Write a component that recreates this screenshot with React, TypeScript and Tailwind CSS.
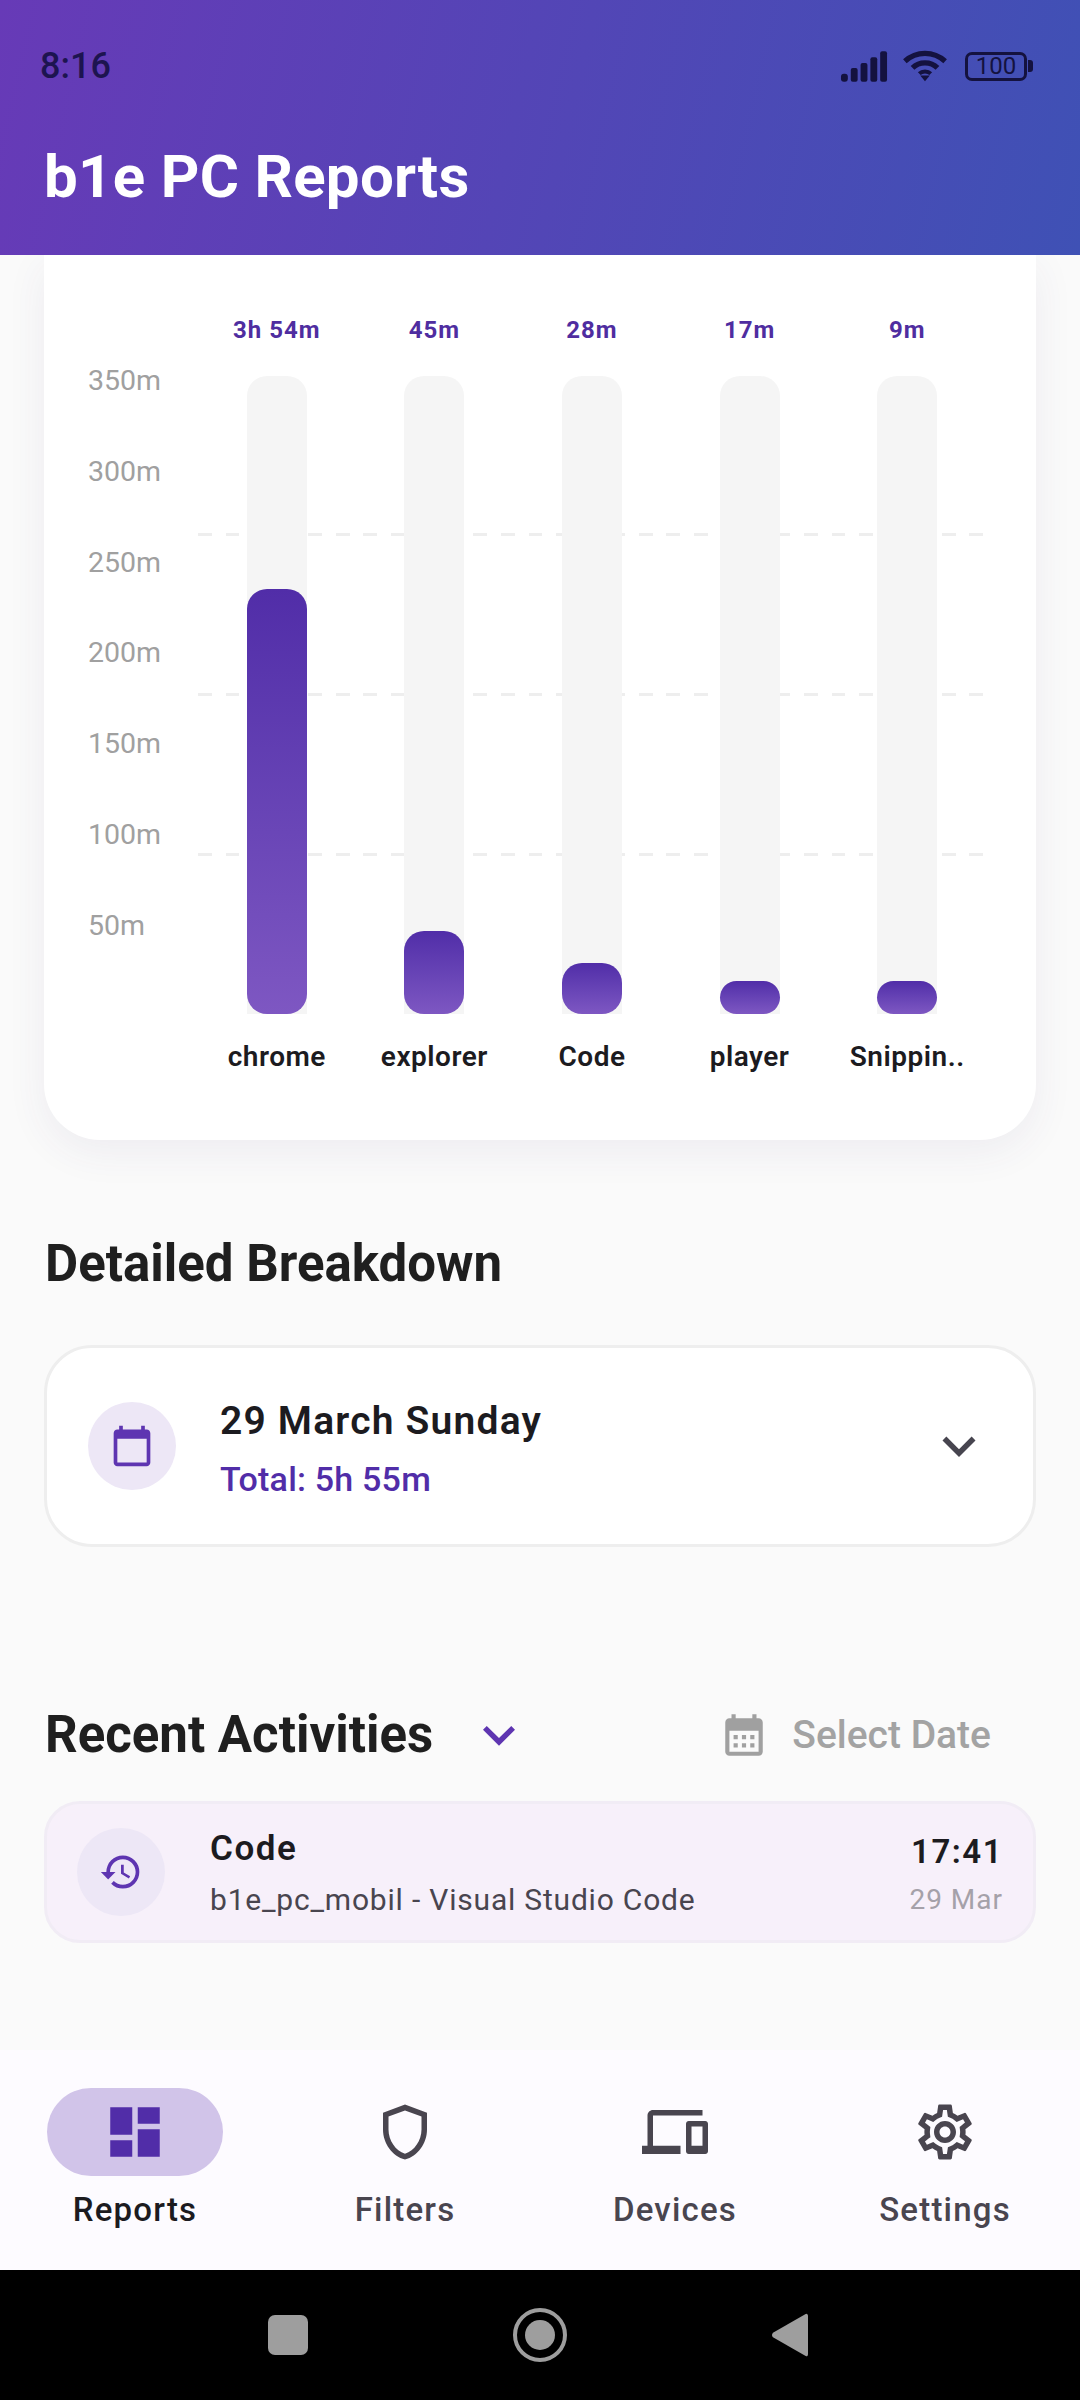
import {
  MdCalendarMonth,
  MdCalendarToday,
  MdDashboard,
  MdExpandMore,
  MdHistory,
  MdOutlineDevices,
  MdOutlineSettings,
  MdOutlineShield,
} from "react-icons/md";

const apps = [
  { value: "3h 54m", name: "chrome", fill: "h-[425px]" },
  { value: "45m", name: "explorer", fill: "h-[83px]" },
  { value: "28m", name: "Code", fill: "h-[51px]" },
  { value: "17m", name: "player", fill: "h-[33px]" },
  { value: "9m", name: "Snippin..", fill: "h-[33px]" },
];

const ticks = ["350m", "300m", "250m", "200m", "150m", "100m", "50m"];

const tabs = [
  { label: "Reports", Icon: MdDashboard },
  { label: "Filters", Icon: MdOutlineShield },
  { label: "Devices", Icon: MdOutlineDevices },
  { label: "Settings", Icon: MdOutlineSettings },
];

function StatusIcons() {
  return (
    <div className="flex items-center gap-[13px] text-[#14123f]">
      <svg width="49" height="32" viewBox="0 0 50 32" fill="currentColor">
        <rect x="1" y="24" width="7" height="8" rx="3" />
        <rect x="11" y="18" width="7" height="14" rx="2" />
        <rect x="21" y="13" width="7" height="19" rx="2" />
        <rect x="31" y="7" width="7" height="25" rx="2" />
        <rect x="41" y="1" width="7" height="31" rx="2" />
      </svg>
      <svg width="46" height="34" viewBox="0 0 48 34" fill="none" stroke="currentColor" strokeWidth="5.5">
        <path d="M3 12 C15 1 33 1 45 12" />
        <path d="M11 19 C18 12 30 12 37 19" />
        <path d="M18 25 C21 22 27 22 30 25" strokeWidth="4" />
        <path d="M19 27 L24 33 L29 27 Z" fill="currentColor" stroke="none" />
      </svg>
      <div className="ml-[4px] flex items-center gap-[1px]">
        <div className="flex h-[29px] w-[62px] items-center justify-center rounded-[7px] border-[3px] border-[#14123f] text-[24px] leading-none text-[#14123f]">
          100
        </div>
        <div className="h-[12px] w-[5px] rounded-r-[3px] bg-[#14123f]" />
      </div>
    </div>
  );
}

function ChartCard() {
  return (
    <section className="mx-[44px] h-[885px] rounded-b-[56px] bg-white px-[44px] pt-[57px] shadow-[0_12px_40px_rgba(70,60,120,0.07)]">
      <div className="flex">
        <div className="mt-[55px] flex h-[560px] w-[110px] flex-col gap-[62.8px]">
          {ticks.map((tick) => (
            <span className="h-[28px] text-[28.5px] leading-[28px] text-[#a0a0a0]" key={tick}>
              {tick}
            </span>
          ))}
        </div>
        <div className="relative flex w-[788px]">
          <div className="absolute left-[0px] right-[3px] top-[221px] h-[3px] bg-[repeating-linear-gradient(90deg,#eeeeee_0_13.8px,transparent_13.8px_27.55px)]" />
          <div className="absolute left-[0px] right-[3px] top-[381px] h-[3px] bg-[repeating-linear-gradient(90deg,#eeeeee_0_13.8px,transparent_13.8px_27.55px)]" />
          <div className="absolute left-[0px] right-[3px] top-[541px] h-[3px] bg-[repeating-linear-gradient(90deg,#eeeeee_0_13.8px,transparent_13.8px_27.55px)]" />
          {apps.map((app) => (
            <div className="relative flex w-[157.6px] flex-col items-center" key={app.name}>
              <span className="h-[36px] text-[24px] font-bold leading-[36px] tracking-[1px] text-[#4f2da0]">{app.value}</span>
              <div className="mt-[28px] flex h-[638px] w-[60px] flex-col justify-end rounded-t-[20px] bg-[#f5f5f5]">
                <div className={`${app.fill} rounded-[20px] bg-gradient-to-b from-[#512da8] to-[#7e57c2]`} />
              </div>
              <span className="mt-[25px] whitespace-nowrap text-[28px] font-semibold leading-[36px] tracking-[0.5px] text-[#1c1b1f]">{app.name}</span>
            </div>
          ))}
        </div>
      </div>
    </section>
  );
}

function BreakdownCard() {
  return (
    <div className="mx-[44px] mt-[48px] flex h-[202px] items-center rounded-[48px] border-[3px] border-[#eeeeee] bg-white px-[41px]">
      <div className="flex h-[88px] w-[88px] items-center justify-center rounded-full bg-[#ede7f6]">
        <MdCalendarToday className="text-[44px] text-[#5e35b1]" />
      </div>
      <div className="ml-[44px] flex flex-1 flex-col pt-[4px]">
        <span className="text-[39px] font-semibold leading-[48px] tracking-[1.2px] text-[#1c1b1f]">29 March Sunday</span>
        <span className="mt-[14px] text-[34px] font-medium leading-[40px] tracking-[0.2px] text-[#512da8]">Total: 5h 55m</span>
      </div>
      <MdExpandMore className="text-[66px] text-[#47454f]" />
    </div>
  );
}

function ActivityCard() {
  return (
    <div className="mx-[44px] mt-[33px] flex h-[142px] items-center rounded-[36px] border-[3px] border-[#f1ecf5] bg-[#f7f0fa] px-[30px]">
      <div className="flex h-[88px] w-[88px] items-center justify-center rounded-full bg-[#ede7f6]">
        <MdHistory className="text-[44px] text-[#5e35b1]" />
      </div>
      <div className="ml-[45px] flex flex-1 flex-col pt-[4px]">
        <span className="text-[35px] font-semibold leading-[40px] tracking-[1.5px] text-[#1c1b1f]">Code</span>
        <span className="mt-[12px] text-[30px] leading-[38px] tracking-[0.8px] text-[#49454f]">b1e_pc_mobil - Visual Studio Code</span>
      </div>
      <div className="flex flex-col items-end pt-[6px]">
        <span className="text-[33px] font-semibold leading-[40px] tracking-[1.5px] text-[#1c1b1f]">17:41</span>
        <span className="mt-[10px] text-[28px] leading-[36px] tracking-[1px] text-[#a5a1a9]">29 Mar</span>
      </div>
    </div>
  );
}

function BottomNav() {
  return (
    <nav className="flex h-[220px] bg-[#fdfbff]">
      {tabs.map(({ label, Icon }, i) => (
        <div className="flex w-[270px] flex-col items-center pt-[38px]" key={label}>
          <div className={`flex h-[88px] w-[176px] items-center justify-center rounded-[44px] ${i === 0 ? "bg-[#d1c4e9]" : ""}`}>
            <Icon className={`text-[66px] ${i === 0 ? "text-[#512da8]" : "text-[#49454f]"}`} />
          </div>
          <span className={`mt-[12px] text-[33px] font-medium leading-[44px] tracking-[1.2px] ${i === 0 ? "text-[#1c1b1f]" : "text-[#49454f]"}`}>
            {label}
          </span>
        </div>
      ))}
    </nav>
  );
}

export default function App() {
  return (
    <main className="flex h-[2400px] w-[1080px] flex-col overflow-hidden bg-[#fafafa] font-['Roboto',sans-serif]">
      <header className="z-10 h-[255px] bg-[linear-gradient(103deg,#673ab7,#3f51b5)] px-[40px] pt-[46px]">
        <div className="flex h-[40px] items-center justify-between">
          <span className="text-[36px] font-medium leading-[40px] text-[#1d1450]">8:16</span>
          <div className="mr-[7px]">
            <StatusIcons />
          </div>
        </div>
        <h1 className="ml-[4px] mt-[56px] text-[60px] font-bold leading-[70px] tracking-[0.3px] text-white">b1e PC Reports</h1>
      </header>

      <div className="flex-1 overflow-hidden">
        <ChartCard />

        <h2 className="ml-[45px] mt-[91px] text-[51px] font-bold leading-[66px] text-[#1f1f1f]">Detailed Breakdown</h2>
        <BreakdownCard />

        <div className="ml-[45px] mr-[89px] mt-[155px] flex h-[66px] items-center">
          <h2 className="text-[51px] font-bold leading-[66px] text-[#1f1f1f]">Recent Activities</h2>
          <MdExpandMore className="ml-[34px] text-[64px] text-[#5e35b1]" />
          <MdCalendarMonth className="ml-auto text-[50px] text-[#a0a0a0]" />
          <span className="ml-[23px] text-[39px] font-medium leading-[50px] text-[#a3a3a3]">Select Date</span>
        </div>
        <ActivityCard />
      </div>

      <BottomNav />

      <div className="flex h-[130px] items-center justify-center gap-[205px] bg-black pr-[4px]">
        <div className="h-[40px] w-[40px] rounded-[7px] bg-[#9e9e9e]" />
        <div className="flex h-[54px] w-[54px] items-center justify-center rounded-full border-[4px] border-[#9e9e9e]">
          <div className="h-[30px] w-[30px] rounded-full bg-[#9e9e9e]" />
        </div>
        <svg width="36" height="46" viewBox="0 0 38 46" fill="#9e9e9e">
          <path d="M36 0.5 C37.5 0.5 38 1.5 38 3 V43 C38 44.5 37.5 45.5 36 45.5 L1 25.5 C-0.3 24 -0.3 22 1 20.5 Z" />
        </svg>
      </div>
    </main>
  );
}
